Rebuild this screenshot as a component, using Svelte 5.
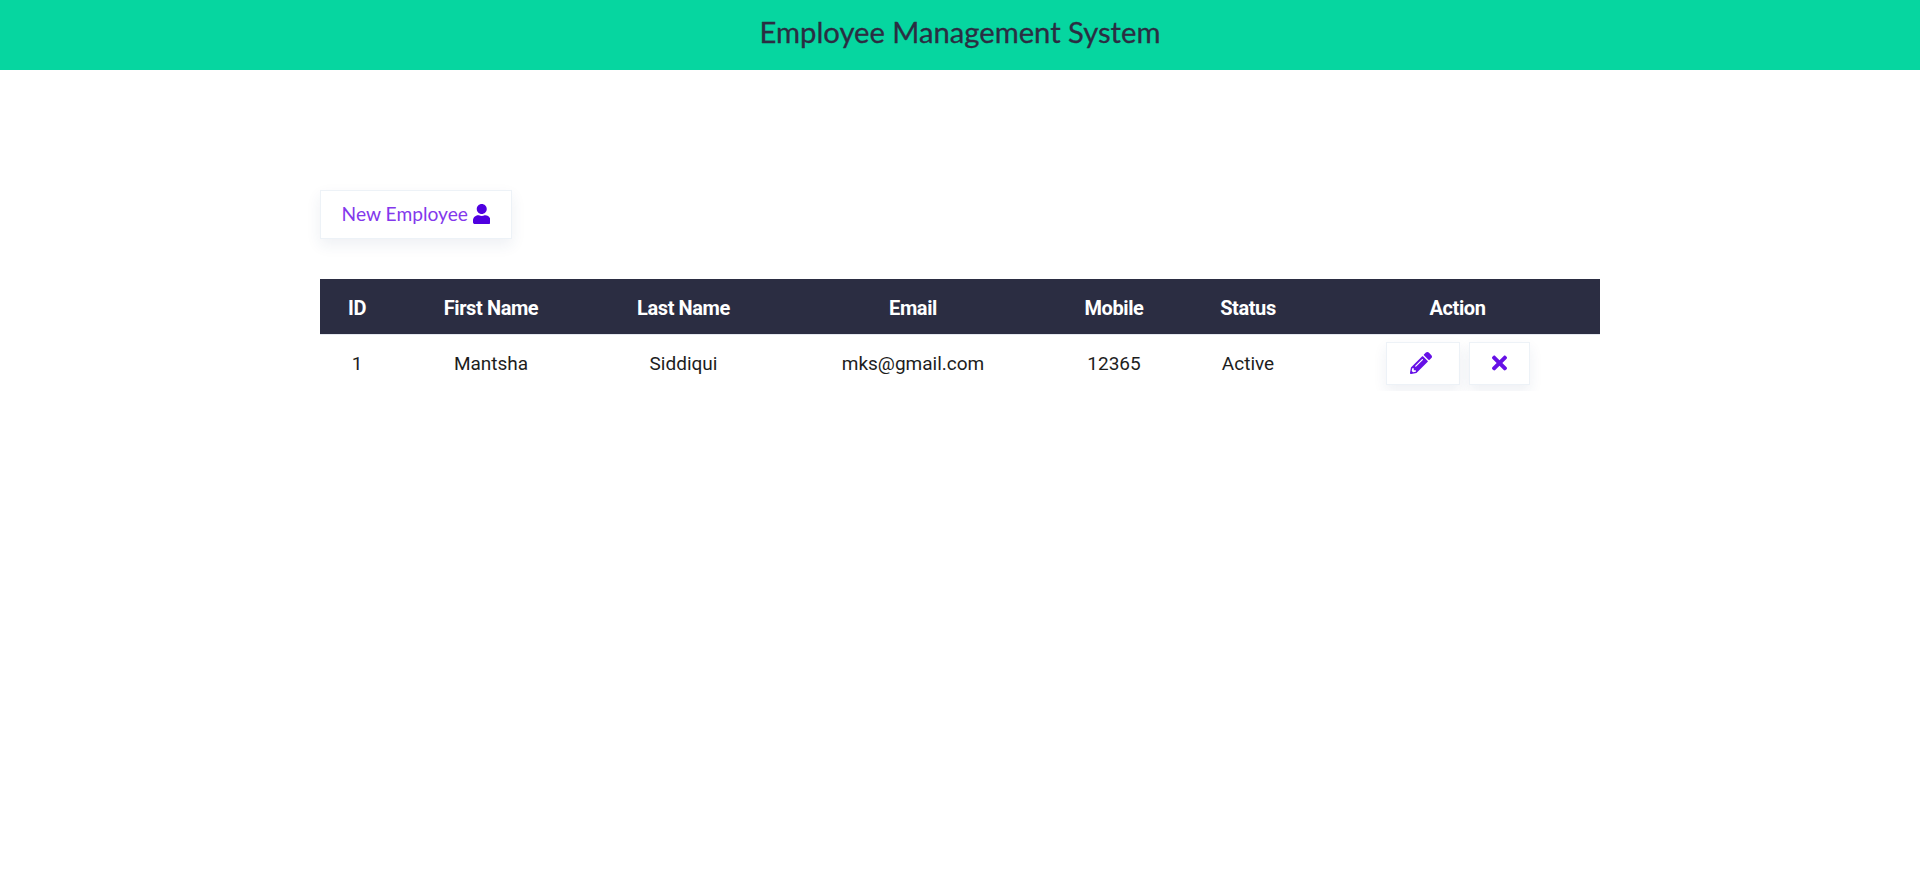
<script lang="ts">
	const employees = [
		{ id: 1, firstName: 'Mantsha', lastName: 'Siddiqui', email: 'mks@gmail.com', mobile: '12365', status: 'Active' }
	];
</script>

<header class="topbar">
	<h1>Employee Management System</h1>
</header>

<main class="content">
	<button type="button" class="new-btn">
		<span>New Employee</span>
		<svg class="user-icon" viewBox="0 0 448 512" aria-hidden="true">
			<path d="M224 256c70.7 0 128-57.3 128-128S294.7 0 224 0 96 57.3 96 128s57.3 128 128 128zm89.6 32h-16.7c-22.2 10.2-46.9 16-72.9 16s-50.6-5.8-72.9-16h-16.7C60.2 288 0 348.2 0 422.4V464c0 26.5 21.5 48 48 48h352c26.5 0 48-21.5 48-48v-41.6c0-74.2-60.2-134.4-134.4-134.4z" />
		</svg>
	</button>

	<table>
		<colgroup>
			<col style="width: 74px" />
			<col style="width: 194px" />
			<col style="width: 191px" />
			<col style="width: 268px" />
			<col style="width: 134px" />
			<col style="width: 134px" />
			<col style="width: 285px" />
		</colgroup>
		<thead>
			<tr>
				<th>ID</th>
				<th>First Name</th>
				<th>Last Name</th>
				<th>Email</th>
				<th>Mobile</th>
				<th>Status</th>
				<th>Action</th>
			</tr>
		</thead>
		<tbody>
			{#each employees as emp}
				<tr>
					<td>{emp.id}</td>
					<td>{emp.firstName}</td>
					<td>{emp.lastName}</td>
					<td>{emp.email}</td>
					<td>{emp.mobile}</td>
					<td>{emp.status}</td>
					<td>
						<div class="actions">
							<button type="button" class="icon-btn edit" aria-label="Edit">
								<svg class="pencil" viewBox="0 0 512 512" aria-hidden="true">
									<path d="M497.9 142.1l-46.1 46.1c-4.7 4.7-12.3 4.7-17 0l-111-111c-4.7-4.7-4.7-12.3 0-17l46.1-46.1c18.7-18.7 49.1-18.7 67.9 0l60.1 60.1c18.8 18.7 18.8 49.1 0 67.9zM284.2 99.8L21.6 362.4.4 483.9c-2.9 16.4 11.4 30.6 27.8 27.8l121.5-21.3 262.6-262.6c4.7-4.7 4.7-12.3 0-17l-111-111c-4.8-4.7-12.4-4.7-17.1 0zM124.1 339.9c-5.5-5.5-5.5-14.3 0-19.8l154-154c5.5-5.5 14.3-5.5 19.8 0s5.5 14.3 0 19.8l-154 154c-5.5 5.5-14.3 5.5-19.8 0zM88 424h48v36.3l-64.5 11.3-31.1-31.1L51.7 376H88v48z" />
								</svg>
							</button>
							<button type="button" class="icon-btn remove" aria-label="Delete">
								<svg class="cross" viewBox="0 0 352 512" aria-hidden="true">
									<path d="M242.72 256l100.07-100.07c12.28-12.28 12.28-32.19 0-44.48l-22.24-22.24c-12.28-12.28-32.19-12.28-44.48 0L176 189.28 75.93 89.21c-12.28-12.28-32.19-12.28-44.48 0L9.21 111.45c-12.28 12.28-12.28 32.19 0 44.48L109.28 256 9.21 356.07c-12.28 12.28-12.28 32.19 0 44.48l22.24 22.24c12.28 12.28 32.2 12.28 44.48 0L176 322.72l100.07 100.07c12.28 12.28 32.2 12.28 44.48 0l22.24-22.24c12.28-12.28 12.28-32.19 0-44.48L242.72 256z" />
								</svg>
							</button>
						</div>
					</td>
				</tr>
			{/each}
		</tbody>
	</table>
</main>

<style>
	:global(body) {
		background: #fff;
		font-family: 'Roboto', 'Liberation Sans', sans-serif;
	}

	.topbar {
		height: 70px;
		box-sizing: border-box;
		padding-bottom: 7px;
		background: #06d6a0;
		display: flex;
		align-items: center;
		justify-content: center;
	}

	h1 {
		margin: 0;
		font-family: 'Lato', 'Open Sans', sans-serif;
		font-size: 29.2px;
		font-weight: 400;
		color: #2b2d42;
		-webkit-text-stroke: 0.3px #2b2d42;
	}

	.content {
		width: 1280px;
		margin: 0 auto;
		padding-top: 120px;
	}

	button {
		background: #fff;
		border: 1px solid #edf2f7;
		box-shadow: 0 6px 14px rgba(40, 70, 120, 0.08);
		cursor: pointer;
		padding: 0;
	}

	.new-btn {
		display: flex;
		align-items: center;
		justify-content: center;
		gap: 5px;
		width: 192px;
		height: 49px;
		margin-bottom: 40px;
		padding-bottom: 2px;
		font-family: 'Lato', 'Open Sans', sans-serif;
		font-size: 19.2px;
		color: #8338ec;
	}

	.user-icon {
		width: 17.5px;
		height: 20px;
		fill: #4f00e0;
	}

	table {
		width: 1280px;
		border-collapse: separate;
		border-spacing: 0;
		table-layout: fixed;
		font-size: 19px;
	}

	th {
		height: 52px;
		padding: 3px 0 0;
		background: #2b2d42;
		color: #fff;
		font-size: 20px;
		font-weight: 700;
		letter-spacing: -0.4px;
		text-align: center;
		border-bottom: 1px solid #e5e8ef;
	}

	td {
		height: 56px;
		padding: 0;
		color: #1d1d1d;
		text-align: center;
	}

	.actions {
		display: flex;
		justify-content: center;
		gap: 9px;
	}

	.icon-btn {
		display: flex;
		align-items: center;
		justify-content: center;
		height: 43px;
	}

	.edit {
		width: 74px;
		padding-right: 4px;
	}

	.remove {
		width: 61px;
	}

	.pencil {
		width: 22px;
		height: 22px;
		fill: #6610e6;
	}

	.cross {
		width: 15px;
		height: 22px;
		fill: #6610e6;
	}
</style>
